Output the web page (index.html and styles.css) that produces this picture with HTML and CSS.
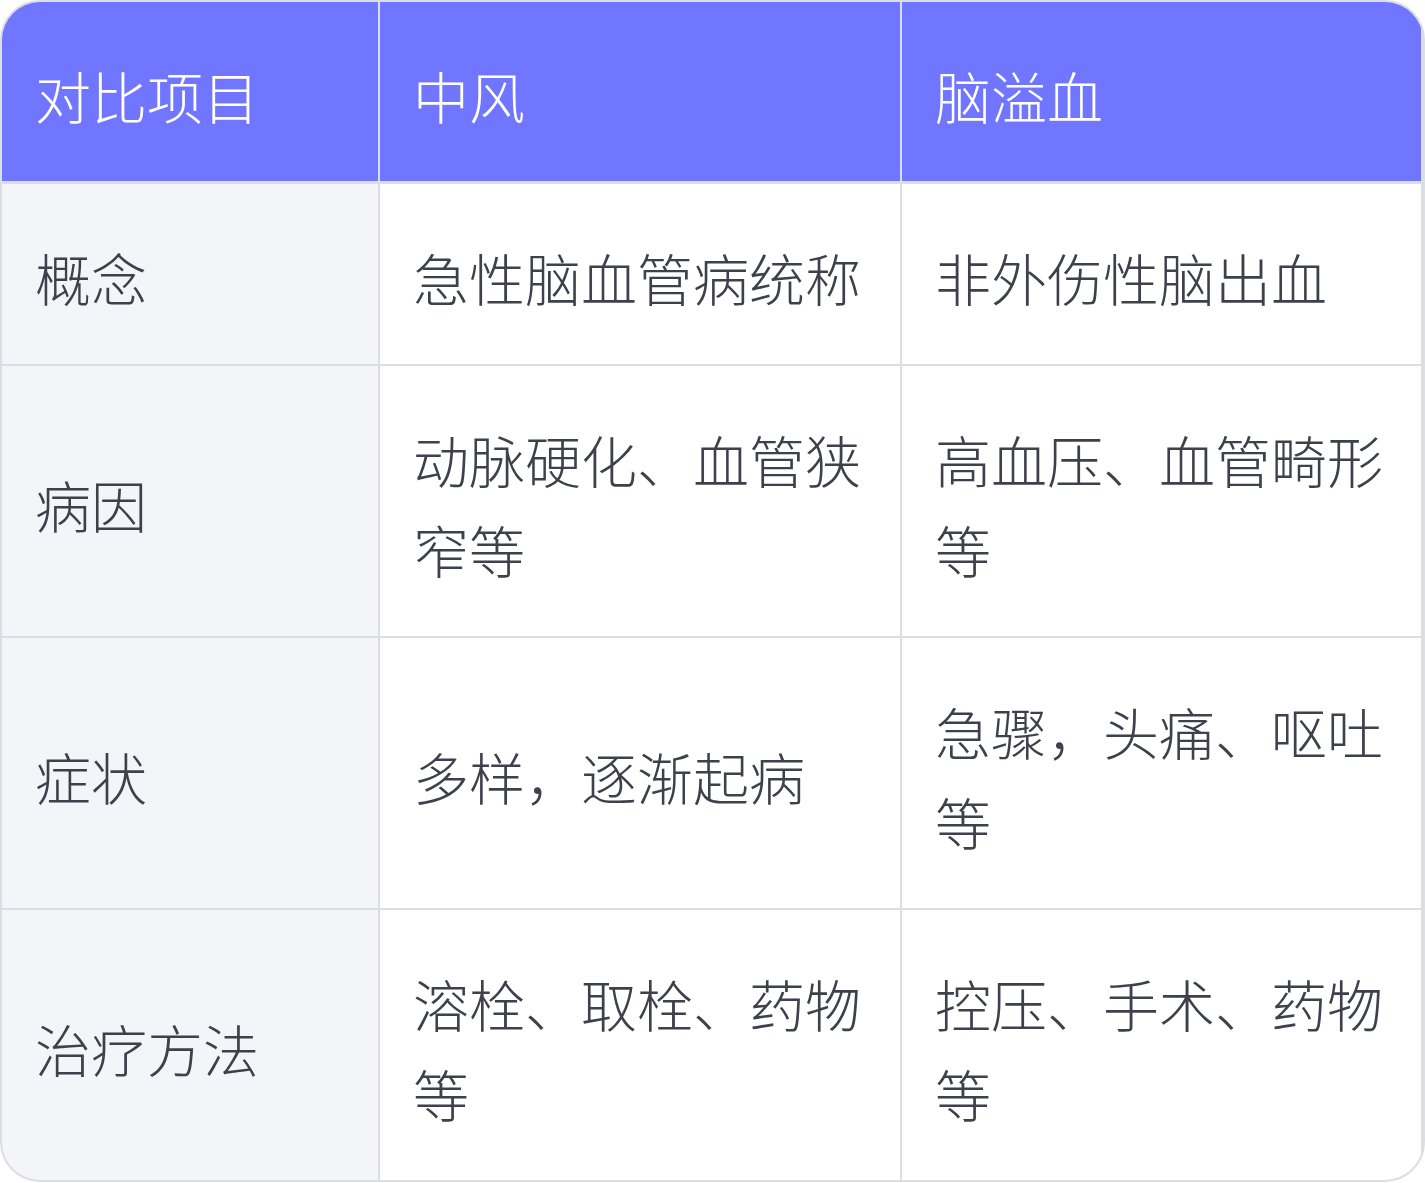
FILE: index.html
```html
<!DOCTYPE html>
<html lang="zh-CN">
<head>
<meta charset="utf-8">
<title>中风与脑溢血对比</title>
<link rel="stylesheet" href="styles.css">
</head>
<body>
<div class="table">
  <div class="cell head">对比项目</div>
  <div class="cell head">中风</div>
  <div class="cell head">脑溢血</div>

  <div class="cell label">概念</div>
  <div class="cell">急性脑血管病统称</div>
  <div class="cell">非外伤性脑出血</div>

  <div class="cell label">病因</div>
  <div class="cell">动脉硬化、血管狭窄等</div>
  <div class="cell">高血压、血管畸形等</div>

  <div class="cell label">症状</div>
  <div class="cell">多样，逐渐起病</div>
  <div class="cell">急骤，头痛、呕吐等</div>

  <div class="cell label">治疗方法</div>
  <div class="cell">溶栓、取栓、药物等</div>
  <div class="cell">控压、手术、药物等</div>
</div>
</body>
</html>
```

FILE: styles.css
```css
html, body {
  margin: 0;
  padding: 0;
  background: #ffffff;
}

.table {
  width: 1425px;
  box-sizing: border-box;
  display: grid;
  grid-template-columns: 376px 520px 519px;
  gap: 2px;
  background: #dddee3;
  border: 2px solid #dddee3;
  border-radius: 40px;
  overflow: hidden;
  font-family: "Noto Sans CJK SC", "Noto Sans", sans-serif;
  font-weight: 300;
  font-size: 56px;
  line-height: 90px;
  color: #3e404c;
}

.cell {
  background: #ffffff;
  padding: 48px 35px 42px 33px;
  display: flex;
  align-items: center;
}

.head {
  background: #7076ff;
  color: #ffffff;
  border-bottom: 1px solid #dddee3;
  padding-bottom: 41px;
}

.label {
  background: #f4f5f9;
}
```
